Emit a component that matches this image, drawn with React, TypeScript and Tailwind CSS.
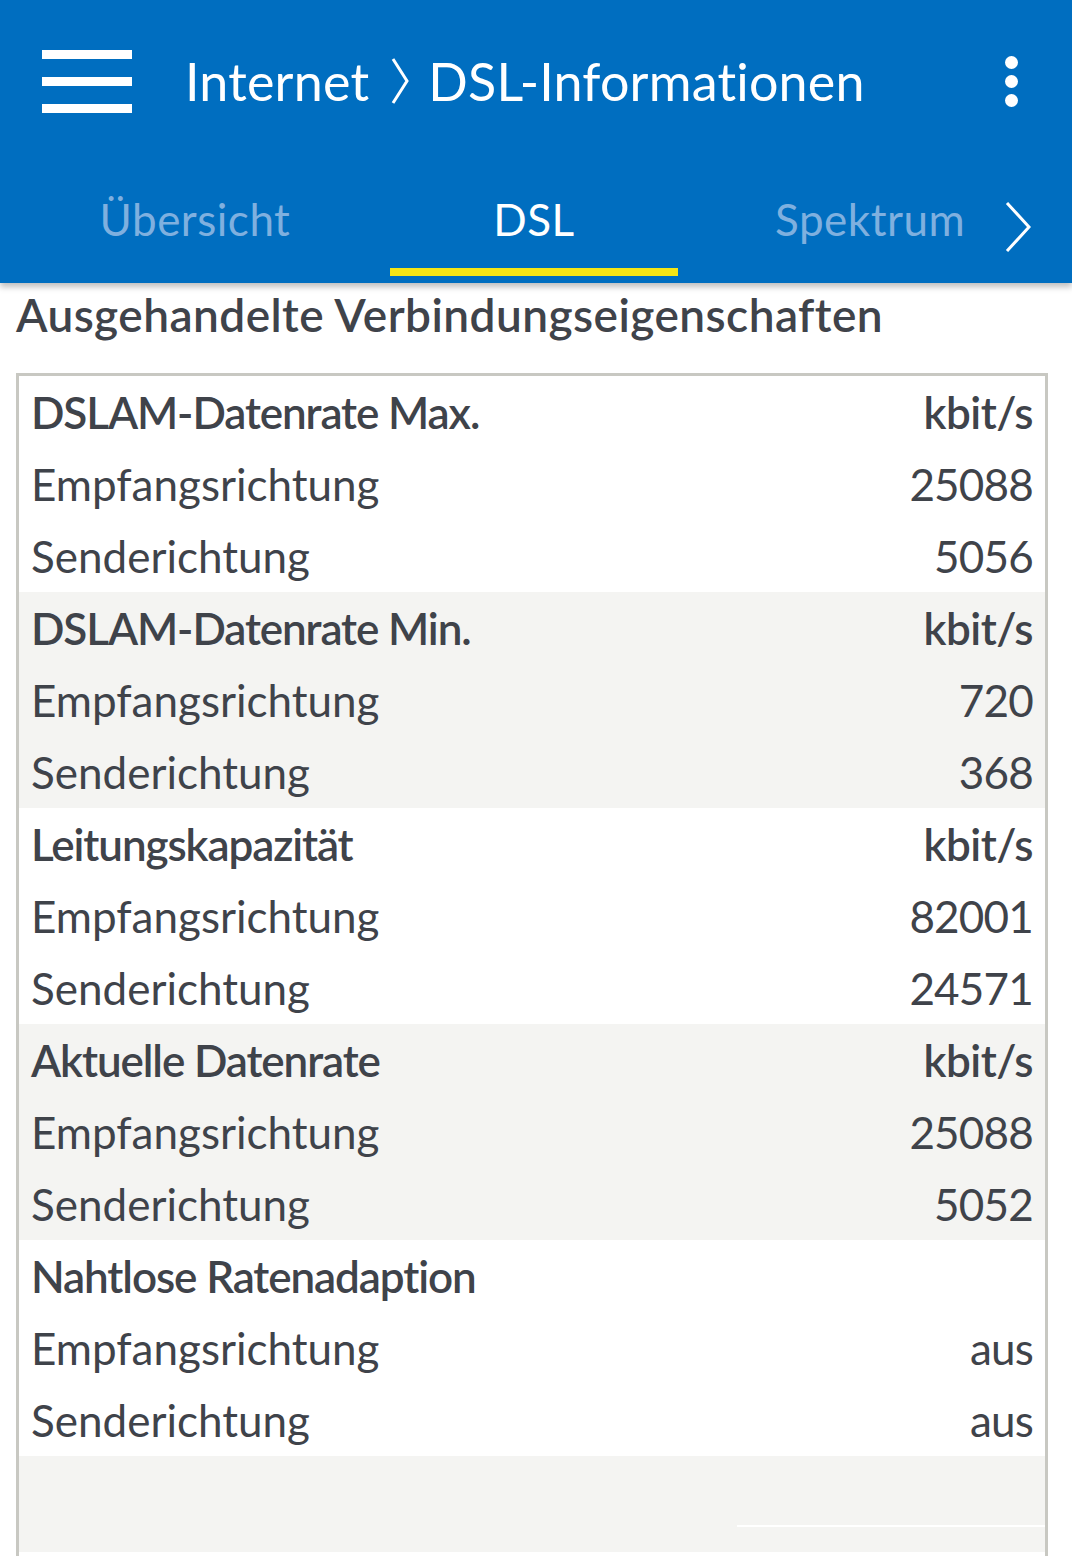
type Row = { label: string; value: string };
type Group = { title: string; unit: string; rows: Row[] };

const groups: Group[] = [
  {
    title: "DSLAM-Datenrate Max.",
    unit: "kbit/s",
    rows: [
      { label: "Empfangsrichtung", value: "25088" },
      { label: "Senderichtung", value: "5056" },
    ],
  },
  {
    title: "DSLAM-Datenrate Min.",
    unit: "kbit/s",
    rows: [
      { label: "Empfangsrichtung", value: "720" },
      { label: "Senderichtung", value: "368" },
    ],
  },
  {
    title: "Leitungskapazität",
    unit: "kbit/s",
    rows: [
      { label: "Empfangsrichtung", value: "82001" },
      { label: "Senderichtung", value: "24571" },
    ],
  },
  {
    title: "Aktuelle Datenrate",
    unit: "kbit/s",
    rows: [
      { label: "Empfangsrichtung", value: "25088" },
      { label: "Senderichtung", value: "5052" },
    ],
  },
  {
    title: "Nahtlose Ratenadaption",
    unit: "",
    rows: [
      { label: "Empfangsrichtung", value: "aus" },
      { label: "Senderichtung", value: "aus" },
    ],
  },
];

function Header() {
  return (
    <header className="relative z-10 h-[283px] bg-[#006ec0] text-white shadow-[0_4px_6px_rgba(0,0,0,0.25)]">
      <div className="flex h-[161px] items-center pt-[1px]">
        <div className="ml-[42px] flex w-[90px] flex-col gap-[18px]">
          <span className="h-[9px] bg-white" />
          <span className="h-[9px] bg-white" />
          <span className="h-[9px] bg-white" />
        </div>
        <h1 className="ml-[53px] flex items-center whitespace-nowrap text-[52px] leading-none tracking-[0.2px]">
          Internet
          <svg viewBox="0 0 20 50" className="ml-[21px] mr-[18px] h-[50px] w-[20px]" fill="none" stroke="white" strokeWidth="3">
            <path d="M3 3 L17 25 L3 47" />
          </svg>
          DSL-Informationen
        </h1>
        <div className="ml-auto mr-[54px] flex flex-col gap-[6px]">
          <span className="h-[13px] w-[13px] rounded-full bg-white" />
          <span className="h-[13px] w-[13px] rounded-full bg-white" />
          <span className="h-[13px] w-[13px] rounded-full bg-white" />
        </div>
      </div>
      <div className="flex h-[122px]">
        <nav className="flex w-[963px] overflow-hidden text-[44px] leading-none tracking-[0.5px]">
          <div className="flex w-[390px] shrink-0 justify-center pt-[36px] text-[#7fb0df]">Übersicht</div>
          <div className="flex w-[288px] shrink-0 flex-col items-center pt-[36px]">
            <span>DSL</span>
            <span className="mt-auto mb-[7px] h-[8px] w-full bg-[#f5e616]" />
          </div>
          <div className="shrink-0 pl-[97px] pt-[36px] text-[#7fb0df]">Spektrum</div>
        </nav>
        <div className="flex flex-1 items-start pt-[40px]">
          <svg viewBox="0 0 26 52" className="ml-[42px] h-[52px] w-[26px]" fill="none" stroke="white" strokeWidth="3">
            <path d="M2 2 L24 26 L2 50" />
          </svg>
        </div>
      </div>
    </header>
  );
}

function Table() {
  return (
    <div className="ml-[16px] mr-[24px] mt-[36px] border-x-[3px] border-t-[3px] border-[#c8c8c2] pb-[4px]">
      {groups.map((g, i) => (
        <div key={g.title} className={i % 2 === 1 ? "bg-[#f4f4f2]" : "bg-white"}>
          <div className="flex h-[72px] items-center justify-between px-[12px] font-semibold">
            <span className="tracking-[-1.1px]">{g.title}</span>
            <span className="tracking-[-0.5px]">{g.unit}</span>
          </div>
          {g.rows.map((r) => (
            <div key={r.label} className="flex h-[72px] items-center justify-between px-[12px]">
              <span>{r.label}</span>
              <span className="tracking-[-0.8px]">{r.value}</span>
            </div>
          ))}
        </div>
      ))}
      <div className="relative h-[96px] bg-[#f4f4f2]">
        <span className="absolute right-0 top-[69px] h-[2px] w-[308px] bg-white" />
      </div>
    </div>
  );
}

export default function App() {
  return (
    <div className="h-[1556px] overflow-hidden bg-white font-['Lato',sans-serif] text-[#3f434a]">
      <Header />
      <h2 className="mt-[10px] ml-[16px] text-[46px] font-semibold leading-[44px] tracking-[0.45px]">
        Ausgehandelte Verbindungseigenschaften
      </h2>
      <div className="text-[44px]">
        <Table />
      </div>
    </div>
  );
}
